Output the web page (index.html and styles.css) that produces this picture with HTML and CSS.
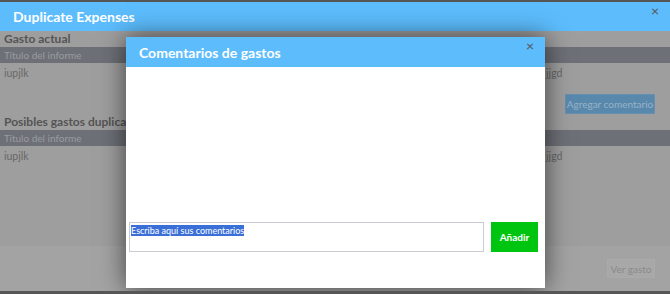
FILE: index.html
```html
<!DOCTYPE html>
<html lang="es">
<head>
    <meta charset="UTF-8">
    <title>Duplicate Expenses</title>
    <link rel="stylesheet" href="styles.css">
</head>
<body>
    <div class="window">
        <div class="window-header">
            <span class="window-title">Duplicate Expenses</span>
            <span class="close">&times;</span>
        </div>

        <div class="window-body">
            <h2 class="section-title">Gasto actual</h2>
            <div class="table-head">
                <span class="col-title">Título del informe</span>
            </div>
            <div class="table-row">
                <span class="col-title">iupjlk</span>
                <span class="col-other">hs jjgd</span>
            </div>
            <div class="actions">
                <button class="btn-blue">Agregar comentario</button>
            </div>

            <h2 class="section-title">Posibles gastos duplicados</h2>
            <div class="table-head">
                <span class="col-title">Título del informe</span>
            </div>
            <div class="table-row">
                <span class="col-title">iupjlk</span>
                <span class="col-other">hs jjgd</span>
            </div>
        </div>

        <div class="window-footer">
            <button class="btn-grey">Ver gasto</button>
        </div>

        <!-- comments dialog on top of the expenses window -->
        <div class="modal">
            <div class="modal-header">
                <span class="modal-title">Comentarios de gastos</span>
                <span class="close">&times;</span>
            </div>
            <div class="modal-body">
                <div class="comment-form">
                    <div class="comment-box"><span class="selected">Escriba aquí sus comentarios</span></div>
                    <button class="btn-green">Añadir</button>
                </div>
            </div>
        </div>
    </div>
</body>
</html>
```

FILE: styles.css
```css
body {
    margin: 0;
    background-color: #565656;
    font-family: Lato, "Open Sans", sans-serif;
    overflow: hidden;
}
.window {
    position: relative;
    margin-top: 2px;
    height: 289px;
    display: flex;
    flex-direction: column;
    background-color: #9e9e9e;
}
.window-header {
    height: 29px;
    background-color: #5cbcfc;
    display: flex;
    align-items: center;
    justify-content: space-between;
    padding: 0 11px 0 13px;
}
.window-title {
    color: white;
    font-weight: bold;
    font-size: 14px;
}
.close {
    color: #555;
    font-size: 14px;
    line-height: 1;
    align-self: flex-start;
    margin-top: 2px;
}
.window-body {
    flex: 1;
    padding-top: 1px;
}
.section-title {
    margin: 0;
    padding-left: 4px;
    height: 14px;
    line-height: 14px;
    font-size: 12px;
    font-weight: bold;
    color: #545454;
}
.table-head {
    margin-top: 1px;
    height: 16px;
    background-color: #6d7077;
    display: flex;
    align-items: center;
    font-size: 10px;
    color: #9a9ca0;
}
.table-row {
    height: 20px;
    display: flex;
    align-items: center;
    font-size: 10.5px;
    color: #676767;
}
.col-title {
    padding-left: 4px;
    width: 525px;
}
.col-other {
    padding-left: 4px;
}
.actions {
    display: flex;
    justify-content: flex-end;
    padding: 11px 15px 1px 0;
}
.btn-blue {
    background-color: #5888ac;
    color: #98b2c6;
    border: 1px solid #6690b0;
    font-family: Lato, sans-serif;
    font-size: 10px;
    height: 20px;
    width: 90px;
    padding: 0;
}
.window-footer {
    height: 45px;
    background-color: #a3a3a3;
    display: flex;
    justify-content: flex-end;
    align-items: center;
    padding-right: 15px;
}
.btn-grey {
    background-color: #a8a8a8;
    color: #8a8a8a;
    border: 1px solid #aaa;
    font-family: Lato, sans-serif;
    font-size: 10px;
    height: 19px;
    width: 48px;
    padding: 0;
}
.modal {
    position: absolute;
    left: 126px;
    top: 35px;
    width: 419px;
    height: 251px;
    background-color: white;
    display: flex;
    flex-direction: column;
    box-shadow: 0 0 24px rgba(0, 0, 0, 0.6);
}
.modal-header {
    height: 30px;
    background-color: #5cbcfc;
    display: flex;
    align-items: center;
    justify-content: space-between;
    padding: 0 11px 0 13px;
}
.modal-title {
    color: white;
    font-weight: bold;
    font-size: 14px;
}
.modal-body {
    flex: 1;
    display: flex;
    flex-direction: column;
    justify-content: flex-end;
    padding: 0 7px 36px 3px;
}
.comment-form {
    display: flex;
    gap: 7px;
}
.comment-box {
    flex: 1;
    height: 30px;
    border: 1px solid #c9ccd1;
    box-sizing: border-box;
    padding: 2px 1px;
    font-size: 9px;
    line-height: 12px;
}
.selected {
    background-color: #3a6fd8;
    color: white;
}
.btn-green {
    width: 47px;
    height: 30px;
    background-color: #00c510;
    color: white;
    border: none;
    font-family: Lato, sans-serif;
    font-weight: bold;
    font-size: 10px;
}
```
